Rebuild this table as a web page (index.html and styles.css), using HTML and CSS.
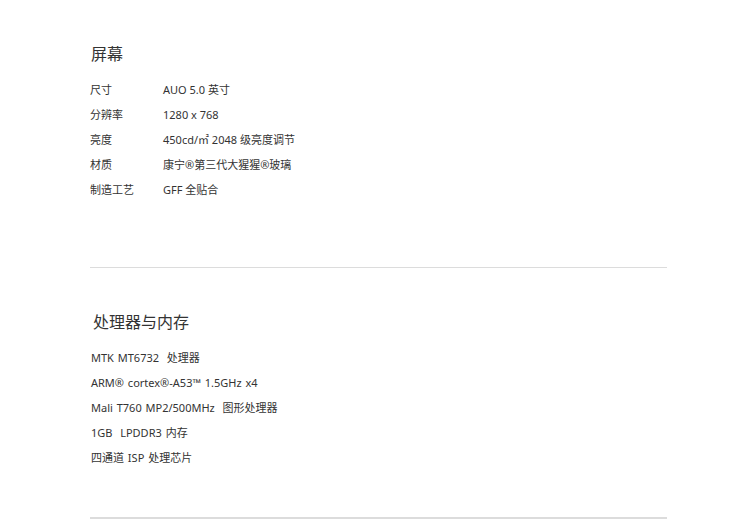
FILE: index.html
```html
<!DOCTYPE html>
<html lang="zh-CN">
<head>
<meta charset="utf-8">
<link rel="stylesheet" href="styles.css">
</head>
<body>
<div class="page">
  <section class="spec spec-screen">
    <h2 class="spec-title">屏幕</h2>
    <dl class="spec-table">
      <div class="spec-row"><dt>尺寸</dt><dd>AUO 5.0 英寸</dd></div>
      <div class="spec-row"><dt>分辨率</dt><dd>1280 x 768</dd></div>
      <div class="spec-row"><dt>亮度</dt><dd>450cd/㎡ 2048 级亮度调节</dd></div>
      <div class="spec-row"><dt>材质</dt><dd>康宁®第三代大猩猩®玻璃</dd></div>
      <div class="spec-row"><dt>制造工艺</dt><dd>GFF 全贴合</dd></div>
    </dl>
  </section>
  <section class="spec spec-cpu">
    <h2 class="spec-title">处理器与内存</h2>
    <ul class="spec-list">
      <li>MTK MT6732&nbsp; 处理器</li>
      <li>ARM® cortex®-A53™ 1.5GHz x4</li>
      <li>Mali T760 MP2/500MHz&nbsp; 图形处理器</li>
      <li>1GB&nbsp; LPDDR3 内存</li>
      <li>四通道 ISP 处理芯片</li>
    </ul>
  </section>
</div>
</body>
</html>
```
FILE: styles.css
```css
html, body {
  margin: 0;
  padding: 0;
  background: #fff;
}
body {
  font-family: "Noto Sans", "Noto Sans CJK SC", sans-serif;
  color: #333;
}
.page {
  width: 577px;
  margin-left: 90px;
}
.spec {
  border-bottom: 1px solid #dcdcdc;
}
.spec-screen {
  padding-top: 44px;
  padding-bottom: 65px;
}
.spec-cpu {
  padding-top: 44px;
  padding-bottom: 47px;
  border-bottom: 2px solid #dcdcdc;
}
.spec-title {
  margin: 0 0 13px 1px;
  font-size: 16px;
  line-height: 20px;
  font-weight: normal;
  color: #333;
}
.spec-cpu .spec-title {
  margin-left: 3px;
}
.spec-table {
  margin: 0;
  font-size: 11px;
  line-height: 25px;
}
.spec-row {
  display: flex;
}
.spec-row dt {
  width: 73px;
}
.spec-row dd {
  margin: 0;
}
.spec-list {
  list-style: none;
  margin: 0;
  padding: 0 0 0 1px;
  font-size: 11px;
  line-height: 25px;
  word-spacing: 1px;
}
```
